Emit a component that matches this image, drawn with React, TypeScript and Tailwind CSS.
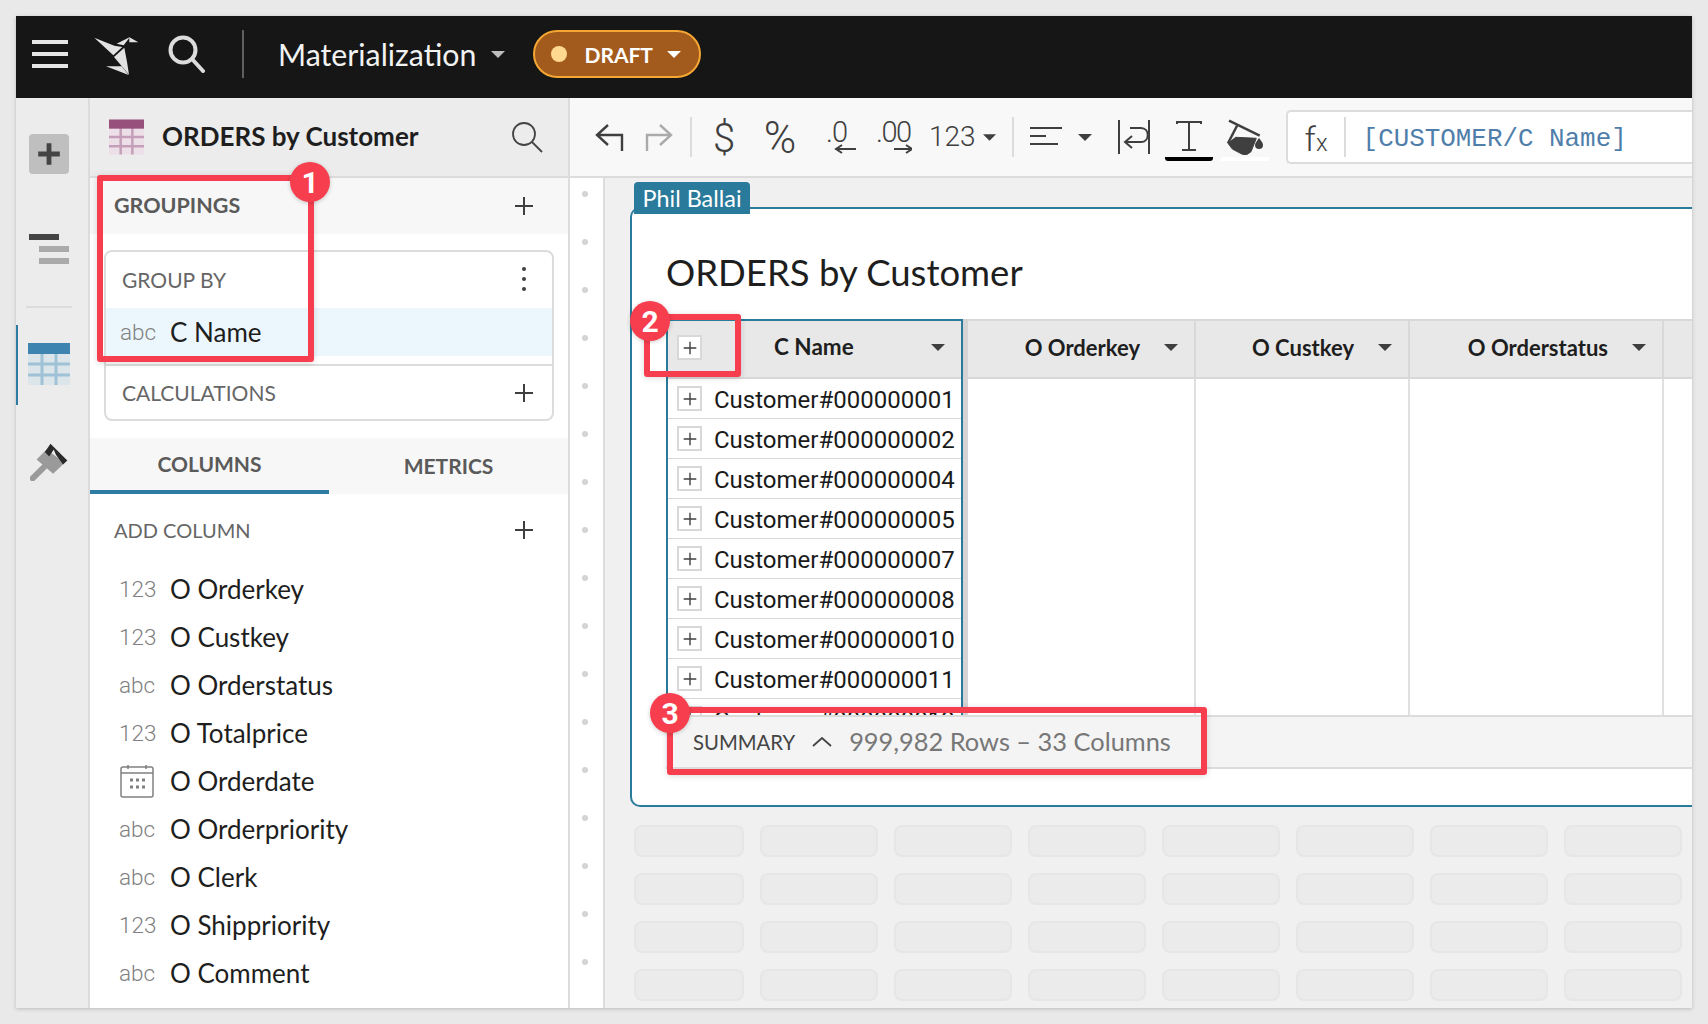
import React from "react";

const ui = "font-['Lato',sans-serif]";
const rb = "font-['Roboto',sans-serif]";

function Ico({ x, w, className = "", children }: { x: number; w: number; className?: string; children: React.ReactNode }) {
  return (
    <svg viewBox={`${x} 107 ${w} 60`} width={w} height={60} className={`shrink-0 ${className}`} fill="none" stroke="#3f3f3f" strokeWidth={2}>
      {children}
    </svg>
  );
}

function Caret({ w = 14, h = 7, color = "#3f3f3f", className = "" }: { w?: number; h?: number; color?: string; className?: string }) {
  return (
    <svg viewBox="0 0 14 7" width={w} height={h} className={`shrink-0 ${className}`}>
      <path d="M0 0H14L7 7Z" fill={color} />
    </svg>
  );
}

function Plus({ size = 20, sw = 2, color = "#3f3f3f" }: { size?: number; sw?: number; color?: string }) {
  return (
    <svg viewBox="0 0 20 20" width={size} height={size} className="shrink-0">
      <path d="M10 1V19M1 10H19" stroke={color} strokeWidth={sw} fill="none" />
    </svg>
  );
}

function GridIcon({ head, cell, line, w, h }: { head: string; cell: string; line: string; w: number; h: number }) {
  return (
    <svg viewBox="0 0 42 42" width={w} height={h} className="shrink-0">
      <rect x="0" y="0" width="42" height="42" fill={cell} />
      <path d="M14 10V42M28 10V42M0 21H42M0 32H42" stroke={line} strokeWidth="3" fill="none" />
      <rect x="0" y="0" width="42" height="11" fill={head} />
    </svg>
  );
}

function Calendar() {
  return (
    <svg viewBox="0 0 34 34" width={34} height={34} className="shrink-0 ml-[1px]" fill="none" stroke="#808080" strokeWidth="1.5">
      <rect x="1" y="3" width="32" height="30" rx="2" />
      <path d="M1 9H33M8 1V5M26 1V5" />
      <path d="M10 16H13M16 16H19M22 16H25M10 23H13M16 23H19M22 23H25" strokeWidth="3" />
    </svg>
  );
}

function Badge({ n, x, y }: { n: number; x: number; y: number }) {
  return (
    <div
      className="absolute w-[40px] h-[40px] rounded-full bg-[#f73e4e] text-white flex items-center justify-center text-[30px] font-bold font-['Roboto',sans-serif] shadow-[0_1px_4px_rgba(0,0,0,0.2)]"
      style={{ left: x, top: y }}
    >
      {n}
    </div>
  );
}

function Box({ x, y, w, h }: { x: number; y: number; w: number; h: number }) {
  return (
    <div
      className="absolute border-[6px] border-[#f73e4e] rounded-[3px] shadow-[0_1px_6px_rgba(0,0,0,0.15)]"
      style={{ left: x, top: y, width: w, height: h }}
    />
  );
}

const columns: [string, string][] = [
  ["123", "O Orderkey"],
  ["123", "O Custkey"],
  ["abc", "O Orderstatus"],
  ["123", "O Totalprice"],
  ["cal", "O Orderdate"],
  ["abc", "O Orderpriority"],
  ["abc", "O Clerk"],
  ["123", "O Shippriority"],
  ["abc", "O Comment"],
];

const customers = ["000000001", "000000002", "000000004", "000000005", "000000007", "000000008", "000000010", "000000011", "000000013"];

function TopBar() {
  return (
    <div className="h-[82px] bg-[#161616] flex items-center shrink-0 pb-[6px]">
      <div className="ml-[16px] w-[36px] h-[28px] flex flex-col justify-between">
        <div className="h-[4px] bg-[#e6e6e6]" />
        <div className="h-[4px] bg-[#e6e6e6]" />
        <div className="h-[4px] bg-[#e6e6e6]" />
      </div>
      <svg viewBox="0 0 210 165" width={70} height={55} className="ml-[17px] shrink-0">
        <path d="M28 32L88 56L112 60L85 85Z" fill="#e2e2e2" />
        <path d="M87 90L118 62L126 105L132 143Z" fill="#e2e2e2" />
        <path d="M95 50L135 30L116 55Z" fill="#e2e2e2" />
        <path d="M133 31L160 46L133 46Z" fill="#e2e2e2" />
        <path d="M63 118L110 118L131 144Z" fill="#e2e2e2" />
      </svg>
      <svg viewBox="0 0 38 38" width={38} height={38} className="ml-[13px] shrink-0" fill="none" stroke="#dcdcdc" strokeWidth="4" strokeLinecap="round">
        <circle cx="15" cy="15" r="12.5" />
        <path d="M24 24L35 36" />
      </svg>
      <div className="ml-[36px] w-[2px] h-[48px] bg-[#5f5f5f]" />
      <div className={`ml-[34px] text-[30.3px] leading-none text-[#f2f2f2] ${ui}`}>Materialization</div>
      <Caret color="#bdbdbd" className="ml-[15px]" />
      <div className="ml-[28px] w-[168px] h-[48px] rounded-full bg-[#a25a1d] border-2 border-[#f5a633] flex items-center">
        <div className="ml-[16px] w-[16px] h-[16px] rounded-full bg-[#ffd98f]" />
        <div className={`ml-[17px] text-[21px] leading-none font-bold text-white ${ui}`}>DRAFT</div>
        <Caret color="#ffffff" className="ml-[14px]" />
      </div>
    </div>
  );
}

function Rail() {
  return (
    <div className="w-[74px] shrink-0 bg-[#ececec] border-r-2 border-[#dcdcdc] flex flex-col items-center pt-[36px]">
      <div className="w-[40px] h-[40px] mr-[7px] rounded-[4px] bg-[#bfbfbf] flex items-center justify-center">
        <Plus size={24} sw={4} color="#444444" />
      </div>
      <div className="mt-[60px] mr-[7px] w-[40px] flex flex-col gap-[6px]">
        <div className="w-[30px] h-[6px] bg-[#444444]" />
        <div className="ml-[10px] w-[30px] h-[6px] bg-[#aaaaaa]" />
        <div className="ml-[10px] w-[30px] h-[6px] bg-[#aaaaaa]" />
      </div>
      <div className="mt-[42px] mr-[7px] w-[46px] h-[2px] bg-[#dcdcdc]" />
      <div className="mt-[17px] w-full h-[80px] border-l-2 border-[#2e7ba3] flex items-center justify-center pr-[9px] pb-[2px]">
        <GridIcon head="#3d85b0" cell="#dbe5ea" line="#9fc2d6" w={42} h={42} />
      </div>
      <svg viewBox="30 65 115 115" width={38} height={38} className="mt-[38px] mr-[7px] shrink-0">
        <path d="M38 172L73 137" stroke="#9a9a9a" strokeWidth="18" strokeLinecap="round" fill="none" />
        <path d="M50 115L80 85L135 125L100 158Z" fill="#9a9a9a" />
        <path d="M75 92L92 67L143 118L130 130L108 100L102 85L88 106Z" fill="#2a2a2a" />
      </svg>
    </div>
  );
}

function Panel() {
  return (
    <div className="w-[480px] shrink-0 bg-white border-r-2 border-[#dcdcdc] flex flex-col">
      <div className="h-[80px] bg-[#ececec] border-b-2 border-[#dcdcdc] flex items-center shrink-0">
        <div className="ml-[19px]">
          <GridIcon head="#97507b" cell="#ecdfe8" line="#c59fb9" w={35} h={36} />
        </div>
        <div className={`ml-[18px] pb-[2px] text-[26px] leading-none font-bold text-[#1e1e1e] ${ui}`}>ORDERS by Customer</div>
        <svg viewBox="0 0 32 32" width={32} height={32} className="ml-auto mr-[25px] shrink-0" fill="none" stroke="#444444" strokeWidth="1.8">
          <circle cx="13" cy="13" r="11" />
          <path d="M21 21L31 31" />
        </svg>
      </div>
      <div className="h-[56px] bg-[#f7f7f7] flex items-center justify-between pl-[24px] pr-[34px] shrink-0">
        <div className={`text-[21.5px] leading-none font-bold text-[#5a5a5a] ${ui}`}>GROUPINGS</div>
        <Plus />
      </div>
      <div className="mt-[16px] mx-[14px] h-[171px] border-2 border-[#dcdcdc] rounded-[8px] overflow-hidden flex flex-col shrink-0">
        <div className="h-[56px] flex items-center justify-between pl-[16px] pr-[25px] pb-[2px]">
          <div className={`text-[21px] leading-none text-[#666666] ${ui}`}>GROUP BY</div>
          <svg viewBox="0 0 6 26" width={6} height={26}>
            <circle cx="3" cy="3" r="2" fill="#3f3f3f" />
            <circle cx="3" cy="13" r="2" fill="#3f3f3f" />
            <circle cx="3" cy="23" r="2" fill="#3f3f3f" />
          </svg>
        </div>
        <div className="h-[48px] bg-[#ecf7fd] flex items-center pl-[14px]">
          <div className={`w-[50px] text-[22.5px] leading-none font-light text-[#808080] ${rb}`}>abc</div>
          <div className={`text-[26px] leading-none text-[#1e1e1e] ${ui}`}>C Name</div>
        </div>
        <div className="mt-[8px] h-[55px] border-t-2 border-[#dcdcdc] flex items-center justify-between pl-[16px] pr-[18px]">
          <div className={`text-[21px] leading-none text-[#666666] ${ui}`}>CALCULATIONS</div>
          <Plus />
        </div>
      </div>
      <div className="mt-[17px] h-[56px] bg-[#f7f7f7] flex shrink-0">
        <div className={`w-[239px] border-b-4 border-[#2e7ba3] flex items-center justify-center text-[21px] font-bold text-[#5a5a5a] ${ui}`}>COLUMNS</div>
        <div className={`flex-1 flex items-center justify-center text-[21px] font-bold text-[#5a5a5a] ${ui}`}>METRICS</div>
      </div>
      <div className="h-[71px] flex items-center justify-between pl-[24px] pr-[34px] shrink-0">
        <div className={`text-[20px] leading-none text-[#666666] ${ui}`}>ADD COLUMN</div>
        <Plus />
      </div>
      {columns.map(([t, name]) => (
        <div key={name} className="h-[48px] flex items-center pl-[29px] shrink-0">
          <div className="w-[51px] flex">
            {t === "cal" ? (
              <Calendar />
            ) : (
              <span className={`text-[22.5px] leading-none font-light text-[#808080] ${rb}`}>{t}</span>
            )}
          </div>
          <div className={`text-[26px] leading-none text-[#1e1e1e] ${ui}`}>{name}</div>
        </div>
      ))}
    </div>
  );
}

function Toolbar() {
  const sep = "w-[2px] h-[40px] bg-[#dcdcdc] shrink-0";
  return (
    <div className="h-[80px] bg-[#f8f8f8] border-b-2 border-[#dcdcdc] flex items-center shrink-0 overflow-hidden">
      <Ico x={595} w={30} className="ml-[25px]">
        <path d="M608 125L597 135L608 145M597 135H622V151" strokeWidth="2.4" />
      </Ico>
      <Ico x={644} w={30} className="ml-[19px]">
        <path d="M660 125L671 135L660 145M671 135H647V151" stroke="#aaaaaa" strokeWidth="2.4" />
      </Ico>
      <div className={`ml-[16px] ${sep}`} />
      <div className={`ml-[17px] w-[30px] pt-[4px] text-center text-[40px] leading-none font-light text-[#3f3f3f] ${rb}`}>$</div>
      <div className={`ml-[16px] w-[50px] pt-[2px] text-center text-[44px] leading-none font-light text-[#3f3f3f] ${rb}`}>%</div>
      <div className="ml-[21px] w-[30px] flex flex-col shrink-0">
        <div className={`text-[29px] leading-[24px] tracking-[-1px] text-[#3f3f3f] font-light ${rb}`}>.0</div>
        <svg viewBox="0 0 30 10" width={30} height={10} fill="none" stroke="#3f3f3f" strokeWidth="2">
          <path d="M30 5H11M16 1L10 5L16 9" />
        </svg>
      </div>
      <div className="ml-[20px] w-[36px] flex flex-col shrink-0">
        <div className={`text-[29px] leading-[24px] tracking-[-1.5px] whitespace-nowrap text-[#3f3f3f] font-light ${rb}`}>.00</div>
        <svg viewBox="0 0 36 10" width={36} height={10} fill="none" stroke="#3f3f3f" strokeWidth="2">
          <path d="M18 5H36M30 1L36 5L30 9" />
        </svg>
      </div>
      <div className={`ml-[17px] text-[28px] leading-none font-light text-[#3f3f3f] ${rb}`}>123</div>
      <Caret w={13} h={7} className="ml-[7px]" />
      <div className={`ml-[16px] ${sep}`} />
      <Ico x={1030} w={32} className="ml-[16px]">
        <path d="M1030 128H1062M1030 136H1046M1030 144H1058" />
      </Ico>
      <Caret className="ml-[16px]" />
      <Ico x={1117} w={34} className="ml-[25px]">
        <path d="M1119 120V154M1149 120V154" />
        <path d="M1130 128H1141C1150 128 1150 142 1141 142H1126M1132 136L1125 142L1132 148" />
      </Ico>
      <div className="ml-[14px] mt-[7px] w-[48px] flex flex-col items-center shrink-0">
        <svg viewBox="1166 120 48 34" width={48} height={34} fill="none" stroke="#3f3f3f" strokeWidth="2">
          <path d="M1178 124V122H1202V124M1190 122V150M1183 150H1197" />
        </svg>
        <div className="mt-[3px] w-[48px] h-[4px] bg-black rounded-b-[3px]" />
      </div>
      <div className="ml-[8px] mt-[5px] w-[48px] flex flex-col items-center shrink-0">
        <svg viewBox="1222 118 48 38" width={48} height={38}>
          <path d="M1230 120.7L1260.7 135.7" stroke="#3f3f3f" strokeWidth="2.5" fill="none" />
          <path d="M1238 125.7L1229 143.3" stroke="#3f3f3f" strokeWidth="2.5" fill="none" />
          <path d="M1229 143.3L1236.7 137.3L1257.3 138.3L1252 151.7Q1248 156 1243.3 154.3L1233.3 149Z" fill="#3f3f3f" stroke="#3f3f3f" strokeWidth="1" strokeLinejoin="round" />
          <path d="M1260 138C1263 142 1264 143 1264 145A4 4 0 0 1 1256 145C1256 143 1258 141 1260 138Z" fill="#3f3f3f" />
        </svg>
        <div className="mt-[1px] w-[48px] h-[4px] bg-white" />
      </div>
      <div className="ml-[17px] flex-1 h-[54px] bg-white border-2 border-r-0 border-[#dcdcdc] rounded-l-[5px] flex items-center">
        <div className={`w-[56px] pl-[17px] pt-[6px] text-[#3f3f3f] font-light ${rb}`}>
          <span className="text-[34px] leading-none">f</span>
          <span className="text-[24px] leading-none">x</span>
        </div>
        <div className="w-[2px] h-[40px] bg-[#dcdcdc]" />
        <div className="ml-[17px] pt-[6px] text-[25.9px] leading-none text-[#4f7eaa] font-['Liberation_Mono',monospace]">[CUSTOMER/C Name]</div>
      </div>
    </div>
  );
}

function HeaderCell({ label, className = "" }: { label: string; className?: string }) {
  return (
    <div className={`h-[60px] bg-[#e8e8e8] border-t-2 border-b-2 border-[#d8d8d8] flex items-center justify-end pr-[16px] pb-[3px] ${className}`}>
      <span className={`text-[22px] leading-none font-bold text-[#1e1e1e] ${ui}`}>{label}</span>
      <Caret className="ml-[24px]" />
    </div>
  );
}

function OtherColumn({ label, w }: { label: string; w: string }) {
  return (
    <div className={`${w} h-full flex flex-col shrink-0`}>
      <HeaderCell label={label} className="border-r-2 border-r-[#d8d8d8]" />
      <div className="flex-1 border-r-2 border-[#e0e0e0]" />
    </div>
  );
}

function DataTable() {
  return (
    <div className="flex flex-col">
      <div className="h-[396px] flex overflow-hidden">
        <div className="w-[297px] border-x-2 border-t-2 border-[#2a7a9b] flex flex-col shrink-0">
          <div className="h-[58px] bg-[#e8e8e8] border-b-2 border-[#d8d8d8] flex items-center pl-[9px] pr-[16px] pb-[3px] shrink-0">
            <div className="w-[25px] h-[25px] border-2 border-[#d8d8d8] bg-white flex items-center justify-center">
              <Plus size={14} />
            </div>
            <span className={`ml-[72px] text-[22.5px] leading-none font-bold text-[#1e1e1e] ${ui}`}>C Name</span>
            <Caret className="ml-auto" />
          </div>
          {customers.map((c) => (
            <div key={c} className="h-[40px] border-b border-[#d8d8d8] flex items-center pl-[9px] shrink-0">
              <div className="w-[25px] h-[25px] border-2 border-[#d8d8d8] bg-white flex items-center justify-center">
                <Plus size={14} />
              </div>
              <span className={`ml-[12px] pt-[2px] text-[24px] leading-none text-[#1a1a1a] ${rb}`}>Customer#{c}</span>
            </div>
          ))}
        </div>
        <div className="w-[5px] bg-[#d4d4d4] shrink-0" />
        <OtherColumn label="O Orderkey" w="w-[228px]" />
        <OtherColumn label="O Custkey" w="w-[214px]" />
        <OtherColumn label="O Orderstatus" w="w-[254px]" />
        <div className="flex-1 h-full flex flex-col">
          <div className="h-[60px] bg-[#e8e8e8] border-t-2 border-b-2 border-[#d8d8d8]" />
        </div>
      </div>
      <div className="h-[54px] bg-[#f4f4f4] border-y-2 border-[#dcdcdc] flex items-center pl-[27px]">
        <span className={`text-[20.3px] leading-none text-[#444444] ${ui}`}>SUMMARY</span>
        <svg viewBox="0 0 20 10" width={20} height={10} className="ml-[17px] shrink-0" fill="none" stroke="#444444" strokeWidth="1.8">
          <path d="M1 9L10 1L19 9" />
        </svg>
        <span className={`ml-[17px] text-[25.4px] leading-none text-[#777777] ${ui}`}>999,982 Rows – 33 Columns</span>
      </div>
    </div>
  );
}

function Canvas() {
  const skeleton = ["w-[110px]", "w-[118px]", "w-[118px]", "w-[118px]", "w-[118px]", "w-[118px]", "w-[118px]", "w-[118px]"];
  return (
    <div className="flex-1 flex min-h-0">
      <div className="w-[33px] bg-white border-r-2 border-[#dcdcdc] box-content shrink-0 flex flex-col items-center pt-[13px] gap-[42px]">
        {Array.from({ length: 17 }).map((_, i) => (
          <div key={i} className="w-[6px] h-[6px] rounded-full bg-[#d4d4d4] shrink-0 mr-[3px]" />
        ))}
      </div>
      <div className="flex-1 bg-[#f0f0f0] relative overflow-hidden pt-[29px] pl-[25px]">
        <div className={`absolute left-[29px] top-[4px] w-[116px] h-[32px] rounded-t-[4px] bg-[#2a7a9b] text-white text-[23.4px] leading-[32px] text-center ${ui}`}>
          Phil Ballai
        </div>
        <div className="h-[600px] bg-white border-y-2 border-l-2 border-[#2a7a9b] rounded-l-[10px] pl-[34px]">
          <div className={`pt-[40px] pb-[24px] text-[36.5px] leading-[46px] text-[#1e1e1e] ${ui}`}>ORDERS by Customer</div>
          <DataTable />
        </div>
        <div className="mt-[18px] ml-[4px] flex flex-col gap-[16px]">
          {[0, 1, 2, 3].map((r) => (
            <div key={r} className="flex gap-[16px]">
              {skeleton.map((w, i) => (
                <div key={i} className={`${w} h-[32px] bg-[#ebebeb] border-2 border-[#e6e6e6] rounded-[8px] shrink-0`} />
              ))}
            </div>
          ))}
        </div>
      </div>
    </div>
  );
}

export default function App() {
  return (
    <div className="relative w-[1708px] h-[1024px] bg-[#e9e9e9] pt-[16px] pl-[16px] pr-[16px] pb-[16px] overflow-hidden">
      <div className="h-full flex flex-col bg-white shadow-[0_1px_4px_rgba(0,0,0,0.2)] overflow-hidden">
        <TopBar />
        <div className="flex-1 flex min-h-0">
          <Rail />
          <Panel />
          <div className="flex-1 min-w-0 flex flex-col">
            <Toolbar />
            <Canvas />
          </div>
        </div>
      </div>
      <Box x={97} y={175} w={217} h={187} />
      <Box x={644} y={314} w={97} h={63} />
      <Box x={667} y={707} w={540} h={68} />
      <Badge n={1} x={290} y={162} />
      <Badge n={2} x={630} y={301} />
      <Badge n={3} x={650} y={693} />
    </div>
  );
}
